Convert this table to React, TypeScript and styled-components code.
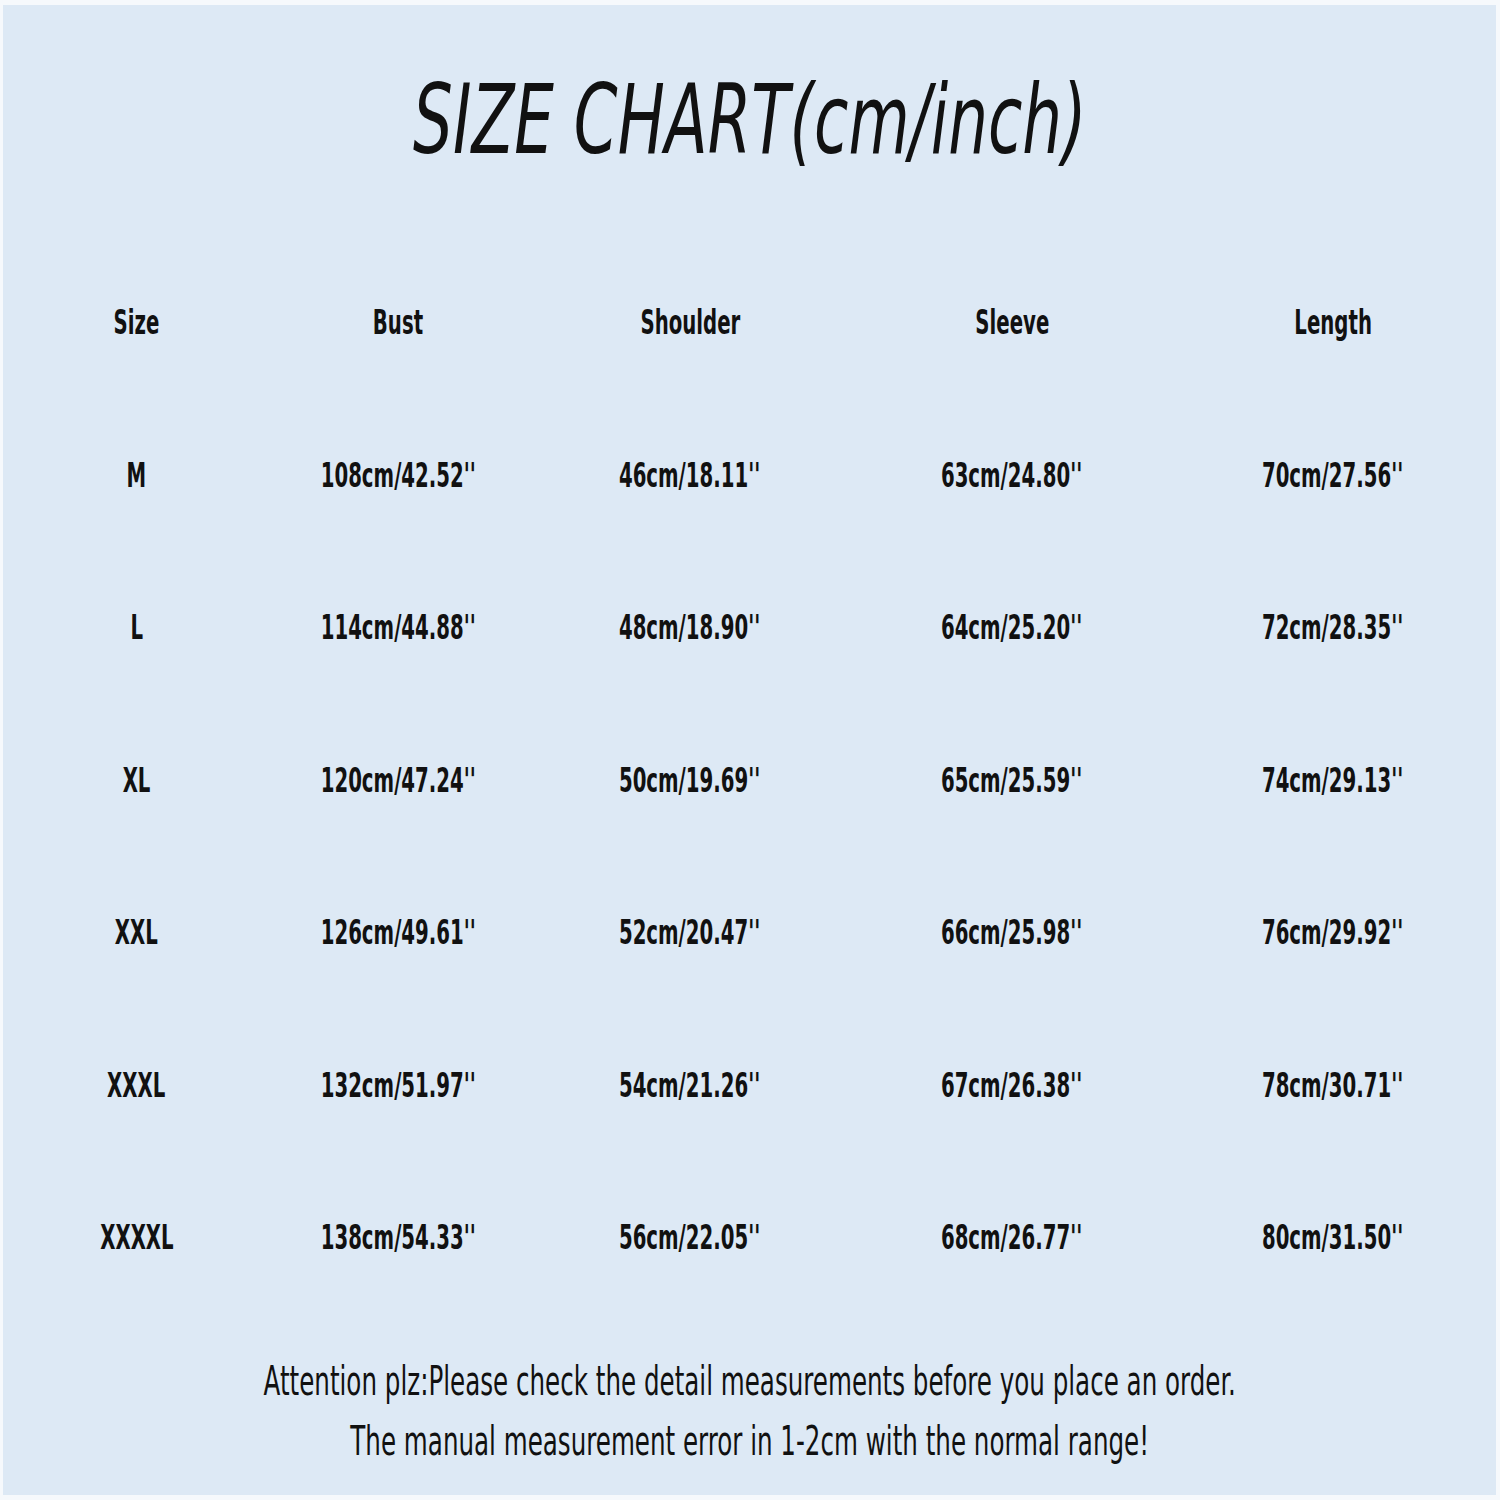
import React from "react"
import styled, { createGlobalStyle } from "styled-components"

const GlobalStyle = createGlobalStyle`
  html, body {
    margin: 0;
    padding: 0;
    background: #f6f9fc;
  }
`

const headers = ["Size", "Bust", "Shoulder", "Sleeve", "Length"]

const rows = [
  ["M", "108cm/42.52''", "46cm/18.11''", "63cm/24.80''", "70cm/27.56''"],
  ["L", "114cm/44.88''", "48cm/18.90''", "64cm/25.20''", "72cm/28.35''"],
  ["XL", "120cm/47.24''", "50cm/19.69''", "65cm/25.59''", "74cm/29.13''"],
  ["XXL", "126cm/49.61''", "52cm/20.47''", "66cm/25.98''", "76cm/29.92''"],
  ["XXXL", "132cm/51.97''", "54cm/21.26''", "67cm/26.38''", "78cm/30.71''"],
  ["XXXXL", "138cm/54.33''", "56cm/22.05''", "68cm/26.77''", "80cm/31.50''"],
]

const App = function () {
  return (
    <Frame>
      <GlobalStyle />
      <Panel>
        <Title>
          <span>SIZE CHART(cm/inch)</span>
        </Title>
        <Table>
          {headers.map(h => (
            <Cell key={h}>
              <span>{h}</span>
            </Cell>
          ))}
          {rows.map(row =>
            row.map((v, i) => (
              <Cell key={row[0] + i}>
                <span>{v}</span>
              </Cell>
            ))
          )}
        </Table>
        <Note>
          <span>Attention plz:Please check the detail measurements before you place an order.</span>
          <span>The manual measurement error in 1-2cm with the normal range!</span>
        </Note>
      </Panel>
    </Frame>
  )
}

const Frame = styled.div`
  width: 1500px;
  height: 1500px;
  box-sizing: border-box;
  padding: 5px 4px 5px 3px;
  background: #f6f9fc;
`

const Panel = styled.div`
  height: 100%;
  background: #dde9f5;
  display: flex;
  flex-direction: column;
  align-items: center;
  color: #111;
`

const Title = styled.h1`
  margin: 0;
  height: 241px;
  width: 100%;
  display: flex;
  justify-content: center;
  align-items: flex-start;
  padding-top: 67px;
  box-sizing: border-box;
  span {
    display: inline-block;
    font-family: "Liberation Sans Narrow", "DejaVu Sans Condensed", sans-serif;
    font-style: italic;
    font-weight: 400;
    font-size: 96px;
    line-height: 1;
    transform: scaleX(0.726);
    white-space: nowrap;
  }
`

const Table = styled.div`
  display: grid;
  grid-template-columns: 267px 256px 328px 316px 326px;
  grid-auto-rows: 152.5px;
  width: 100%;
`

const Cell = styled.div`
  display: flex;
  align-items: center;
  justify-content: center;
  span {
    display: inline-block;
    font-family: "Liberation Sans Narrow", "DejaVu Sans Condensed", sans-serif;
    font-weight: 700;
    font-size: 34px;
    line-height: 1;
    white-space: nowrap;
    transform: scaleX(0.645);
  }
`

const Note = styled.div`
  margin-top: 47px;
  display: flex;
  flex-direction: column;
  align-items: center;
  gap: 20px;
  span {
    display: inline-block;
    font-family: "Liberation Sans Narrow", "DejaVu Sans Condensed", sans-serif;
    font-size: 40px;
    line-height: 1;
    white-space: nowrap;
    transform: scaleX(0.683);
  }
`

export default App
